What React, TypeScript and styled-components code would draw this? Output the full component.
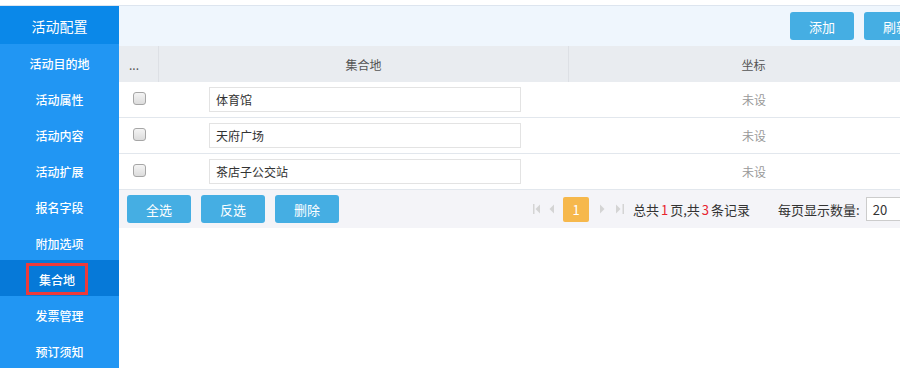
import React from 'react';
import styled, { createGlobalStyle } from 'styled-components';

const GlobalStyle = createGlobalStyle`
  html, body {
    margin: 0;
    padding: 0;
    background: #fff;
    overflow: hidden;
  }
  body {
    font-family: "Noto Sans CJK SC", "Noto Sans", "Liberation Sans", sans-serif;
    font-size: 12px;
    color: #333;
  }
`;

const Page = styled.div`
  width: 900px;
  height: 368px;
  overflow: hidden;
  display: flex;
  flex-direction: column;
`;

const TopLine = styled.div`
  height: 5px;
  flex: none;
  border-bottom: 1px solid #dde5ef;
`;

const Body = styled.div`
  flex: 1;
  display: flex;
  min-height: 0;
`;

const Sidebar = styled.nav`
  width: 119px;
  flex: none;
  background: #2196f3;
  display: flex;
  flex-direction: column;
`;

const SideHeader = styled.div`
  height: 40px;
  box-sizing: border-box;
  padding-top: 2px;
  background: #0a88e9;
  color: #fff;
  font-size: 14px;
  display: flex;
  align-items: center;
  justify-content: center;
`;

const SideItem = styled.div<{ $active?: boolean }>`
  height: 36px;
  box-sizing: border-box;
  padding-top: 3px;
  flex: none;
  display: flex;
  align-items: center;
  justify-content: center;
  color: #fff;
  font-size: 12px;
  font-weight: 500;
  background: ${(p) => (p.$active ? '#0679d8' : 'transparent')};
`;

const Marked = styled.span`
  display: flex;
  align-items: center;
  justify-content: center;
  box-sizing: border-box;
  width: 62px;
  height: 32px;
  margin-right: 5px;
  margin-top: -2px;
  padding-top: 1px;
  border: 3px solid #ee3a3a;
`;

const Main = styled.div`
  flex: 1;
  min-width: 0;
  overflow: hidden;
  display: flex;
  flex-direction: column;
`;

const Toolbar = styled.div`
  height: 40px;
  flex: none;
  background: #eff6fd;
  display: flex;
  align-items: center;
  gap: 10px;
  padding-left: 671px;
`;

const Button = styled.button`
  width: 64px;
  height: 28px;
  flex: none;
  border: none;
  border-radius: 3px;
  background: #45aee3;
  color: #fff;
  font-family: inherit;
  font-size: 13px;
  padding: 0;
  cursor: pointer;
`;

const Grid = styled.div`
  display: grid;
  grid-template-columns: 40px 410px 370px 200px;
  width: 1020px;
`;

const HeadCell = styled.div`
  height: 36px;
  background: #e9ecf0;
  color: #555;
  display: flex;
  align-items: center;
  justify-content: center;
  border-right: 1px solid #dde0e5;
  box-sizing: border-box;

  &:first-child {
    justify-content: flex-start;
    padding-left: 10px;
  }
`;

const Cell = styled.div<{ $align?: 'left' | 'center' }>`
  height: 36px;
  box-sizing: border-box;
  border-bottom: 1px solid #e2e7ed;
  display: flex;
  align-items: center;
  justify-content: ${(p) => (p.$align === 'left' ? 'flex-start' : 'center')};
  color: #999;
  font-size: 12px;
`;

const InputCell = styled(Cell)`
  padding-left: 50px;
  padding-bottom: 1px;
`;

const Check = styled.span`
  width: 11px;
  height: 11px;
  border: 1px solid #a6a6a6;
  border-radius: 3px;
  background: linear-gradient(#f4f4f4, #dcdcdc);
  margin-left: 1px;
  margin-bottom: 2px;
`;

const TextInput = styled.div`
  width: 312px;
  height: 25px;
  box-sizing: border-box;
  border: 1px solid #e3e3e3;
  padding-left: 6px;
  display: flex;
  align-items: center;
  color: #333;
  font-size: 12px;
`;

const Footer = styled.div`
  height: 38px;
  flex: none;
  background: #f4f4f8;
  display: flex;
  align-items: center;
  gap: 10px;
  padding-left: 8px;
  width: 1000px;
`;

const Pager = styled.div`
  display: flex;
  align-items: center;
  margin-left: 184px;
  font-size: 13px;
  color: #333;
`;

const PagerIcon = styled.svg<{ $gap: number }>`
  height: 10px;
  margin-right: ${(p) => p.$gap}px;
`;

const PageNum = styled.span`
  width: 26px;
  height: 25px;
  border-radius: 2px;
  background: #f6b84c;
  color: #fff;
  font-size: 13px;
  display: flex;
  align-items: center;
  justify-content: center;
  margin-right: 11px;
`;

const Info = styled.span`
  white-space: nowrap;
`;

const Num = styled.span`
  color: #e8232e;
  margin: 0 2px;
`;

const SizeLabel = styled.span`
  margin-left: 28px;
  white-space: nowrap;
`;

const SizeBox = styled.div`
  width: 60px;
  height: 24px;
  box-sizing: border-box;
  border: 1px solid #ccc;
  background: #fff;
  margin-left: 6px;
  padding-left: 6px;
  display: flex;
  align-items: center;
  font-size: 13px;
  color: #333;
`;

const menu = ['活动目的地', '活动属性', '活动内容', '活动扩展', '报名字段', '附加选项', '集合地', '发票管理', '预订须知'];
const rows = ['体育馆', '天府广场', '茶店子公交站'];

const grey = '#d4d4d4';

export default function App() {
  return (
    <Page>
      <GlobalStyle />
      <TopLine />
      <Body>
        <Sidebar>
          <SideHeader>活动配置</SideHeader>
          {menu.map((m) =>
            m === '集合地' ? (
              <SideItem key={m} $active>
                <Marked>{m}</Marked>
              </SideItem>
            ) : (
              <SideItem key={m}>{m}</SideItem>
            )
          )}
        </Sidebar>
        <Main>
          <Toolbar>
            <Button>添加</Button>
            <Button>刷新</Button>
          </Toolbar>
          <Grid>
            <HeadCell>...</HeadCell>
            <HeadCell>集合地</HeadCell>
            <HeadCell>坐标</HeadCell>
            <HeadCell />
            {rows.map((r) => (
              <React.Fragment key={r}>
                <Cell>
                  <Check />
                </Cell>
                <InputCell $align="left">
                  <TextInput>{r}</TextInput>
                </InputCell>
                <Cell>未设</Cell>
                <Cell />
              </React.Fragment>
            ))}
          </Grid>
          <Footer>
            <Button>全选</Button>
            <Button>反选</Button>
            <Button>删除</Button>
            <Pager>
              <PagerIcon $gap={8} width="8" viewBox="0 0 8 10">
                <rect x="0" y="0" width="1.5" height="10" fill={grey} />
                <path d="M7 0.5 L2.5 5 L7 9.5 Z" fill={grey} />
              </PagerIcon>
              <PagerIcon $gap={9} width="5" viewBox="0 0 5 10">
                <path d="M5 0.5 L0.5 5 L5 9.5 Z" fill={grey} />
              </PagerIcon>
              <PageNum>1</PageNum>
              <PagerIcon $gap={11} width="5" viewBox="0 0 5 10">
                <path d="M0 0.5 L4.5 5 L0 9.5 Z" fill={grey} />
              </PagerIcon>
              <PagerIcon $gap={9} width="8" viewBox="0 0 8 10">
                <path d="M0 0.5 L4.5 5 L0 9.5 Z" fill={grey} />
                <rect x="6.5" y="0" width="1.5" height="10" fill={grey} />
              </PagerIcon>
              <Info>
                总共<Num>1</Num>页,共<Num>3</Num>条记录
              </Info>
              <SizeLabel>每页显示数量:</SizeLabel>
              <SizeBox>20</SizeBox>
            </Pager>
          </Footer>
        </Main>
      </Body>
    </Page>
  );
}
